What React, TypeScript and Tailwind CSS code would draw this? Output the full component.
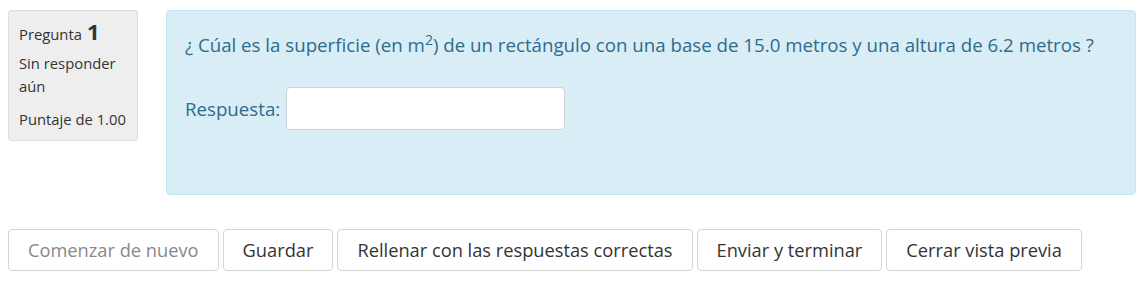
export default function App() {
  return (
    <div
      className="min-h-[285px] bg-white px-2 pt-[10px]"
      style={{ fontFamily: '"Open Sans", "DejaVu Sans", sans-serif' }}
    >
      <div className="flex items-start gap-[28px]">
        <div className="w-[130px] shrink-0 rounded-[3px] border border-[#dcdcdc] bg-[#eeeeee] px-[10px] pb-[9px] pt-[9px] text-[14.8px] leading-[23px] text-[#333]">
          <div className="mb-[6px] flex items-baseline gap-[5px]">
            <span>Pregunta</span>
            <span className="text-[22px] font-bold leading-[23px]">1</span>
          </div>
          <div className="mb-[10px] leading-[23px]">Sin responder aún</div>
          <div>Puntaje de 1.00</div>
        </div>
        <div className="h-[185px] flex-1 rounded-[4px] border border-[#bce8f1] bg-[#d9edf7] px-[18px] pt-[21px] text-[18.7px] text-[#2f6b8b]">
          <p className="leading-[26px]">
            ¿ Cúal es la superficie (en m<sup className="text-[14px]">2</sup>) de un rectángulo con una base de 15.0 metros y una altura de 6.2 metros ?
          </p>
          <div className="mt-[29px] flex items-center gap-[6px]">
            <label className="leading-[26px]">Respuesta:</label>
            <input
              type="text"
              className="h-[43px] w-[279px] rounded-[4px] border border-[#c9d3d8] bg-white px-2 outline-none"
            />
          </div>
        </div>
      </div>
      <div className="mt-[34px] flex gap-[4px] text-[18.25px]">
        <button className="h-[42px] rounded-[4px] border border-[#d4d4d4] bg-white px-[19px] text-[#888]">
          Comenzar de nuevo
        </button>
        <button className="h-[42px] rounded-[4px] border border-[#d4d4d4] bg-white px-[19px] text-[#333]">
          Guardar
        </button>
        <button className="h-[42px] rounded-[4px] border border-[#d4d4d4] bg-white px-[19px] text-[#333]">
          Rellenar con las respuestas correctas
        </button>
        <button className="h-[42px] rounded-[4px] border border-[#d4d4d4] bg-white px-[19px] text-[#333]">
          Enviar y terminar
        </button>
        <button className="h-[42px] rounded-[4px] border border-[#d4d4d4] bg-white px-[19px] text-[#333]">
          Cerrar vista previa
        </button>
      </div>
    </div>
  );
}
